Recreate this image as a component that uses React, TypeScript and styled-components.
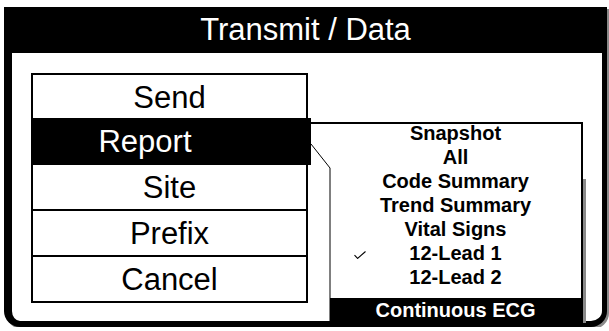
import styled, { createGlobalStyle } from 'styled-components';

const GlobalStyle = createGlobalStyle`
    html, body {
        margin: 0;
        padding: 0;
        background: #ffffff;
    }
    body {
        font-family: 'Liberation Sans', Arial, Helvetica, sans-serif;
        color: #000;
    }
`;

const Frame = styled('div')`
    box-sizing: border-box;
    margin: 7px 0 0 4px;
    width: 603px;
    height: 320px;
    display: flex;
    flex-direction: column;
    background: #fff;
    border-style: solid;
    border-color: #000;
    border-width: 0 5px 6px 8px;
    border-radius: 0 0 16px 16px;
    box-shadow: 2px 2px 0 #8a8a8a;
`;

const TitleBar = styled('div')`
    height: 46px;
    margin: 0 -5px 0 -8px;
    background: #000;
    color: #fff;
    display: flex;
    align-items: center;
    justify-content: center;
    font-size: 31px;
    line-height: 1;
    padding-bottom: 2px;
    box-sizing: border-box;
`;

const Body = styled('div')`
    position: relative;
    flex: 1;
    padding: 20px 0 0 19px;
`;

const Menu = styled('div')`
    width: 277px;
    box-sizing: border-box;
    border: 2px solid #000;
    display: flex;
    flex-direction: column;
`;

const MenuItem = styled('div')<{ $selected?: boolean }>`
    height: 44px;
    display: flex;
    align-items: center;
    justify-content: center;
    font-size: 31px;
    line-height: 1;
    border-top: ${(p) => (p.$selected ? 'none' : '2px solid #000')};
    &:first-child {
        border-top: none;
    }
    ${(p) =>
        p.$selected &&
        `
        background: #000;
        color: #fff;
        height: 47px;
        margin: -1px -5px 0 -2px;
        padding-right: 52px;
        & + div { border-top: none; }
    `}
`;

const SubMenu = styled('div')`
    position: absolute;
    left: 318px;
    top: 69px;
    width: 253px;
    height: 199px;
    box-sizing: border-box;
    border-top: 2px solid #000;
    border-right: 2px solid #000;
    background: #fff;
    display: flex;
    flex-direction: column;

    &::after {
        content: '';
        position: absolute;
        right: -5px;
        top: 55px;
        bottom: -2px;
        width: 3px;
        background: #8a8a8a;
    }
`;

const Connector = styled('svg')`
    position: absolute;
    left: -19px;
    top: -2px;
    overflow: visible;
`;

const SubItem = styled('div')<{ $selected?: boolean }>`
    position: relative;
    height: 24px;
    flex: none;
    display: flex;
    align-items: center;
    justify-content: center;
    font-size: 20px;
    font-weight: bold;
    line-height: 1;
    &:first-of-type {
        margin-top: -3px;
    }
    ${(p) =>
        p.$selected &&
        `
        background: #000;
        color: #fff;
        flex: 1;
        height: auto;
        margin-top: 9px;
    `}
`;

const Check = styled('svg')`
    position: absolute;
    left: 24px;
    top: 10px;
`;

const menuItems = ['Send', 'Report', 'Site', 'Prefix', 'Cancel'];
const subItems = [
    'Snapshot',
    'All',
    'Code Summary',
    'Trend Summary',
    'Vital Signs',
    '12-Lead 1',
    '12-Lead 2',
    'Continuous ECG',
];

const App = () => (
    <>
        <GlobalStyle />
        <Frame>
            <TitleBar>Transmit / Data</TitleBar>
            <Body>
                <Menu>
                    {menuItems.map((item) => (
                        <MenuItem key={item} $selected={item === 'Report'}>
                            {item}
                        </MenuItem>
                    ))}
                </Menu>
                <SubMenu>
                    <Connector width="20" height="201" viewBox="0 0 20 201">
                        <path d="M0 1 H20" stroke="#000" strokeWidth="2" fill="none" />
                        <path d="M0 22 L19 46 V201" stroke="#000" strokeWidth="1" fill="none" />
                    </Connector>
                    {subItems.map((item) => (
                        <SubItem key={item} $selected={item === 'Continuous ECG'}>
                            {item === '12-Lead 1' && (
                                <Check width="12" height="8" viewBox="0 0 12 8">
                                    <path d="M0.5 4.2 L3.6 7.4 L11.5 0.5" stroke="#000" strokeWidth="1.1" fill="none" />
                                </Check>
                            )}
                            {item}
                        </SubItem>
                    ))}
                </SubMenu>
            </Body>
        </Frame>
    </>
);

export default App;
